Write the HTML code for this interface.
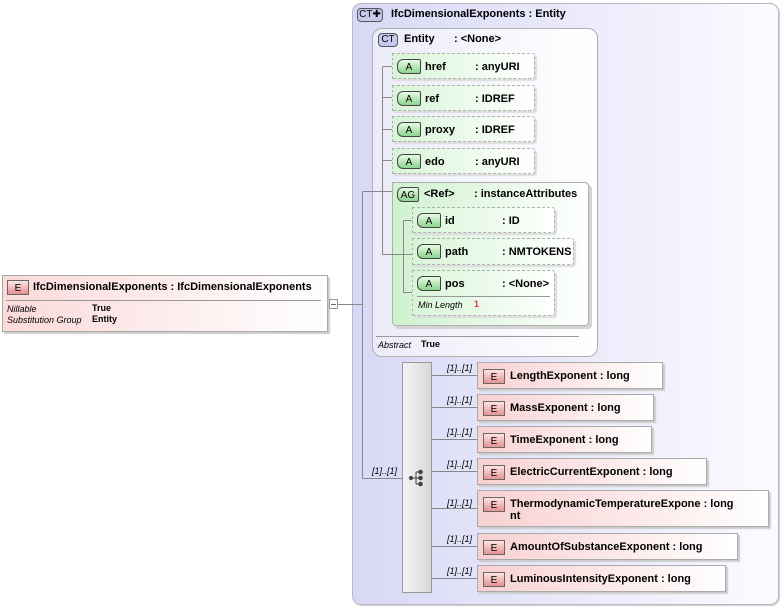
<!DOCTYPE html>
<html><head><meta charset="utf-8"><style>
*{margin:0;padding:0;box-sizing:border-box}
body{width:782px;height:608px;background:#fff;position:relative;overflow:hidden;font-family:"Liberation Sans",sans-serif;font-size:11px;color:#000}
.a{position:absolute}
.b{font-weight:bold}
.outer{left:352px;top:3px;width:427px;height:602px;border:1px solid #b8b8c8;border-radius:9px;background:linear-gradient(90deg,#d8d8f6,#fbfbff);box-shadow:1px 1px 1px #ccc}
.ent{left:372px;top:28px;width:226px;height:329px;border:1px solid #b0b0b0;border-radius:10px;background:linear-gradient(90deg,#ececfa,#fff)}
.badge{position:absolute;border:1px solid #555;border-radius:4px;font-size:10px;text-align:center;line-height:12px;height:14px}
.ct{background:#c8c8ee;color:#000}
.attr{position:absolute;border:1px dashed #b0b0b0;background:linear-gradient(90deg,#d8f5d8,#fff);border-radius:0 3px 3px 0;box-shadow:2px 2px 1px #ddd}
.ab{position:absolute;left:4px;top:5px;width:24px;height:15px;border:1px solid #444;border-radius:6px 2px 2px 6px;background:linear-gradient(#e8fae8,#8ed48e);font-size:10px;text-align:center;line-height:15px}
.el{position:absolute;left:477px;border:1px solid #aaa;background:linear-gradient(90deg,#f8d0d0,#fff);box-shadow:2px 2px 1px #ccc;height:27px}
.eb{position:absolute;left:5px;top:6px;width:22px;height:15px;border:1px solid #666;background:linear-gradient(#fde6e6,#e89090);font-size:10px;text-align:center;line-height:15px}
.et{position:absolute;left:32px;top:7px;font-weight:bold;font-size:11px;line-height:12px}
.m{position:absolute;left:447px;font-style:italic;font-size:9px}
.t{position:absolute;top:7px;font-weight:bold}
</style></head><body>
<div class="a outer"></div>
<div class="badge ct" style="left:357px;top:8px;width:26px">CT✚</div>
<div class="a b" style="left:391px;top:8px">IfcDimensionalExponents : Entity</div>
<div class="a ent"></div>
<div class="badge ct" style="left:378px;top:33px;width:20px">CT</div>
<div class="a b" style="left:404px;top:33px">Entity</div><div class="a b" style="left:454px;top:33px">: &lt;None&gt;</div>

<div class="attr" style="left:392px;top:53px;width:143px;height:26px"><div class="ab">A</div><span class="t" style="left:32px">href</span><span class="t" style="left:82px">: anyURI</span></div>
<div class="attr" style="left:392px;top:85px;width:143px;height:26px"><div class="ab">A</div><span class="t" style="left:32px">ref</span><span class="t" style="left:82px">: IDREF</span></div>
<div class="attr" style="left:392px;top:116px;width:143px;height:26px"><div class="ab">A</div><span class="t" style="left:32px">proxy</span><span class="t" style="left:82px">: IDREF</span></div>
<div class="attr" style="left:392px;top:148px;width:143px;height:26px"><div class="ab">A</div><span class="t" style="left:32px">edo</span><span class="t" style="left:82px">: anyURI</span></div>

<div class="a" style="left:392px;top:182px;width:197px;height:144px;border:1px solid #b0b0b0;border-radius:0 4px 4px 4px;background:linear-gradient(90deg,#cff2cf,#fff);box-shadow:3px 3px 0 #d4d4d4"></div>
<div class="ab" style="left:397px;top:187px;width:22px">AG</div>
<div class="a b" style="left:424px;top:188px">&lt;Ref&gt;</div><div class="a b" style="left:474px;top:188px">: instanceAttributes</div>

<div class="attr" style="left:412px;top:207px;width:143px;height:26px"><div class="ab">A</div><span class="t" style="left:32px">id</span><span class="t" style="left:89px">: ID</span></div>
<div class="attr" style="left:412px;top:238px;width:162px;height:27px"><div class="ab">A</div><span class="t" style="left:32px">path</span><span class="t" style="left:89px">: NMTOKENS</span></div>
<div class="attr" style="left:412px;top:270px;width:143px;height:46px"><div class="ab">A</div><span class="t" style="left:32px">pos</span><span class="t" style="left:89px">: &lt;None&gt;</span>
<div class="a" style="left:4px;top:25px;width:133px;border-top:1px solid #999"></div>
<span class="a" style="left:5px;top:29px;font-size:9px;font-style:italic">Min Length</span><span class="a b" style="left:61px;top:28px;font-size:9px;color:#e33">1</span></div>

<div class="a" style="left:378px;top:340px;font-size:9px;font-style:italic">Abstract</div><div class="a b" style="left:421px;top:339px;font-size:9px">True</div>

<div class="a" style="left:2px;top:275px;width:326px;height:57px;border:1px solid #aaa;background:linear-gradient(90deg,#fbdada,#fff);box-shadow:2px 2px 1px #ccc"></div>
<div class="eb" style="left:7px;top:280px">E</div>
<div class="a b" style="left:33px;top:281px">IfcDimensionalExponents : IfcDimensionalExponents</div>
<div class="a" style="left:6px;top:300px;width:315px;border-top:1px solid #999"></div>
<div class="a" style="left:7px;top:304px;font-size:9px;font-style:italic;line-height:11px">Nillable<br>Substitution Group</div>
<div class="a b" style="left:92px;top:303px;font-size:9px;line-height:11px">True<br>Entity</div>

<div class="a" style="left:402px;top:362px;width:30px;height:231px;border:1px solid #999;background:linear-gradient(90deg,#f4f4f4,#d8d8d8)"></div>
<svg class="a" style="left:408px;top:469px" width="20" height="18"><g fill="#444" stroke="#444"><circle cx="3" cy="9" r="1.6"/><path d="M3 9H8M8 3V15M8 3H12M8 9H12M8 15H12" fill="none"/><circle cx="12.5" cy="3" r="1.8"/><circle cx="12.5" cy="9" r="1.8"/><circle cx="12.5" cy="15" r="1.8"/></g></svg>
<div class="a" style="left:372px;top:466px;font-size:9px;font-style:italic">[1]..[1]</div>

<div class="m" style="top:363px">[1]..[1]</div>
<div class="m" style="top:395px">[1]..[1]</div>
<div class="m" style="top:427px">[1]..[1]</div>
<div class="m" style="top:459px">[1]..[1]</div>
<div class="m" style="top:498px">[1]..[1]</div>
<div class="m" style="top:534px">[1]..[1]</div>
<div class="m" style="top:566px">[1]..[1]</div>

<div class="el" style="top:362px;width:186px"><div class="eb">E</div><div class="et">LengthExponent : long</div></div>
<div class="el" style="top:394px;width:177px"><div class="eb">E</div><div class="et">MassExponent : long</div></div>
<div class="el" style="top:426px;width:175px"><div class="eb">E</div><div class="et">TimeExponent : long</div></div>
<div class="el" style="top:458px;width:230px"><div class="eb">E</div><div class="et">ElectricCurrentExponent : long</div></div>
<div class="el" style="top:490px;width:292px;height:37px"><div class="eb">E</div><div class="et">ThermodynamicTemperatureExpone : long<br>nt</div></div>
<div class="el" style="top:533px;width:261px"><div class="eb">E</div><div class="et">AmountOfSubstanceExponent : long</div></div>
<div class="el" style="top:565px;width:249px"><div class="eb">E</div><div class="et">LuminousIntensityExponent : long</div></div>

<svg class="a" style="left:0;top:0" width="782" height="608">
<g stroke="#888" fill="none" stroke-width="1">
<path d="M336 304.5H362.5M362.5 191.5V478.5H402M362.5 191.5H382.5M382.5 66.5V254.5M382.5 66.5H392M382.5 97.5H392M382.5 129.5H392M382.5 160.5H392M382.5 191.5H392M382.5 254.5H412M403.5 220.5V292.5M403.5 220.5H412M403.5 292.5H412"/>
<path d="M432 375.5H477M432 407.5H477M432 439.5H477M432 471.5H477M432 508.5H477M432 546.5H477M432 578.5H477"/>
<path d="M376 336.5H579" stroke="#999"/>
</g>
<rect x="329.5" y="299.5" width="8" height="9" fill="#fff" stroke="#999"/><path d="M331 304.5H336" stroke="#666"/>
</svg>
</body></html>
